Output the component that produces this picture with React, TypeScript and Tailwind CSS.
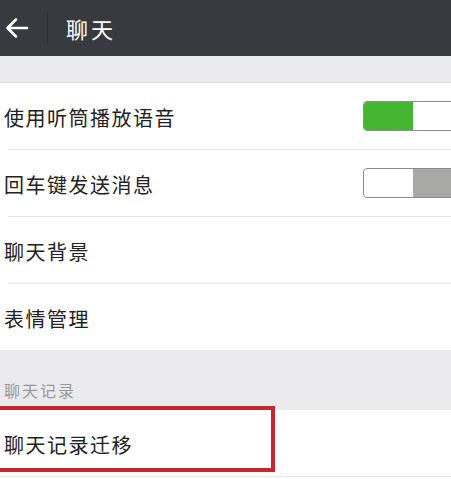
import React from 'react';

const font = { fontFamily: '"Noto Sans CJK SC", "Noto Sans", sans-serif' };

const Toggle = ({ on }: { on: boolean }) => (
  <div className="ml-auto -mr-[12px] flex h-[30px] w-[100px] shrink-0 overflow-hidden rounded-[4px] border border-[#8c8c8c]">
    {on ? (
      <>
        <div className="h-full w-[49px] bg-[#44b631]" />
        <div className="h-full flex-1 bg-white" />
      </>
    ) : (
      <>
        <div className="h-full w-[49px] rounded-[4px] bg-white" />
        <div className="h-full flex-1 bg-[#a8a9a7]" />
      </>
    )}
  </div>
);

const Row = ({ label, children, last }: { label: string; children?: React.ReactNode; last?: boolean }) => (
  <div className="bg-white">
    <div className="flex h-[66px] items-center pl-1">
      <span className="pt-[4px] text-[20px] tracking-[1.5px] text-[#222]">{label}</span>
      {children}
    </div>
    {!last && <div className="ml-2 h-px bg-[#e6e6e6]" />}
  </div>
);

export default function App() {
  return (
    <div className="flex h-[479px] w-[451px] flex-col overflow-hidden bg-[#ebeaec]" style={font}>
      <div className="flex h-[56px] shrink-0 items-center bg-[#393a3f]">
        <svg width="30" height="24" viewBox="0 0 30 24" className="ml-[2px]">
          <path d="M25 12H6M14 3.5L5.5 12L14 20.5" stroke="white" strokeWidth="2.6" fill="none" strokeLinecap="round" strokeLinejoin="round" />
        </svg>
        <div className="ml-[15px] h-[32px] w-px bg-[#2c2d31]" />
        <span className="ml-[18px] text-[22px] tracking-[3px] text-white">聊天</span>
      </div>
      <div className="h-[27px] shrink-0 border-b border-[#dedede]" />
      <Row label="使用听筒播放语音">
        <Toggle on />
      </Row>
      <Row label="回车键发送消息">
        <Toggle on={false} />
      </Row>
      <Row label="聊天背景" />
      <Row label="表情管理" last />
      <div className="flex h-[60px] shrink-0 items-end pb-[8px] pl-1">
        <span className="text-[16px] tracking-[2px] text-[#9a9a9a]">聊天记录</span>
      </div>
      <div className="relative shrink-0 bg-white">
        <Row label="聊天记录迁移" last />
        <div className="absolute -left-[4px] -top-[4px] h-[66px] w-[279px] border-4 border-[#c9252f]" />
      </div>
      <div className="flex-1 border-t border-[#e6e6e6] bg-white" />
    </div>
  );
}
